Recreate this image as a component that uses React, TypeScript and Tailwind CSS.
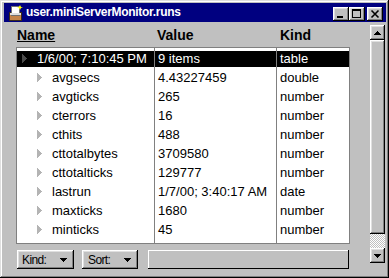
const rows = [
  { name: "1/6/00; 7:10:45 PM", value: "9 items", kind: "table", top: true },
  { name: "avgsecs", value: "4.43227459", kind: "double" },
  { name: "avgticks", value: "265", kind: "number" },
  { name: "cterrors", value: "16", kind: "number" },
  { name: "cthits", value: "488", kind: "number" },
  { name: "cttotalbytes", value: "3709580", kind: "number" },
  { name: "cttotalticks", value: "129777", kind: "number" },
  { name: "lastrun", value: "1/7/00; 3:40:17 AM", kind: "date" },
  { name: "maxticks", value: "1680", kind: "number" },
  { name: "minticks", value: "45", kind: "number" },
];

const raised =
  "bg-[#c0c0c0] shadow-[inset_-1px_-1px_0_#000,inset_1px_1px_0_#fff,inset_-2px_-2px_0_#808080,inset_2px_2px_0_#dfdfdf]";

const Arrow = ({ dark }: { dark?: boolean }) => (
  <svg width="5" height="9" viewBox="0 0 5 9" shapeRendering="crispEdges" className="shrink-0">
    <path d="M0 0L5 4.5L0 9Z" fill={dark ? "#4a4a4a" : "#b4b4b4"} />
  </svg>
);

const DownTri = () => (
  <svg width="7" height="4" viewBox="0 0 7 4" shapeRendering="crispEdges">
    <path d="M0 0H7L3.5 4Z" fill="#000" />
  </svg>
);

const DocIcon = () => (
  <svg width="14" height="16" viewBox="0 0 14 16" className="shrink-0">
    <rect x="0.5" y="7.5" width="12" height="8" fill="#c4844a" stroke="#3a2a1a" />
    <rect x="2.5" y="1.5" width="8" height="9" fill="#fff" stroke="#707070" />
    <rect x="1" y="8" width="11" height="2" fill="#e0e0e0" />
    <path d="M11 0L12 2L14 2.5L12 3L11 5L10 3L8 2.5L10 2Z" fill="#ffff00" />
  </svg>
);

const TitleButton = ({ children, className }: { children: React.ReactNode; className?: string }) => (
  <div className={`w-[16px] h-[14px] mt-[2px] flex items-center justify-center ${raised} ${className ?? ""}`}>
    {children}
  </div>
);

const App = () => {
  return (
    <div className="w-[389px] h-[278px] bg-[#c0c0c0] pt-[3px] pl-[4px] pr-[3px] pb-[3px] flex flex-col font-['Liberation_Sans',Arial,sans-serif] text-black select-none shadow-[inset_-1px_-1px_0_#000,inset_1px_1px_0_#dfdfdf,inset_-2px_-2px_0_#808080,inset_2px_2px_0_#fff]">
      {/* title bar */}
      <div className="h-[19px] bg-[#000080] flex items-center pl-[5px] pr-[3px]">
        <DocIcon />
        <span className="ml-[3px] text-white font-bold text-[12px] tracking-[-0.3px] leading-[19px]">
          user.miniServerMonitor.runs
        </span>
        <div className="ml-auto flex">
          <TitleButton>
            <svg width="16" height="14" viewBox="0 0 16 14" shapeRendering="crispEdges">
              <rect x="4" y="9" width="6" height="2" fill="#000" />
            </svg>
          </TitleButton>
          <TitleButton>
            <svg width="16" height="14" viewBox="0 0 16 14" shapeRendering="crispEdges">
              <path d="M3 2H12V11H3Z M4 4V10H11V4Z" fill="#000" fillRule="evenodd" />
            </svg>
          </TitleButton>
          <TitleButton className="ml-[2px]">
            <svg width="16" height="14" viewBox="0 0 16 14">
              <path d="M4.5 3.5L11.5 10.5M11.5 3.5L4.5 10.5" stroke="#000" strokeWidth="1.6" />
            </svg>
          </TitleButton>
        </div>
      </div>

      <div className="flex-1 flex">
        <div className="ml-[12px] w-[334px] flex flex-col">
          {/* headers */}
          <div className="h-[25px] flex pt-[5px] text-[14px] font-bold leading-[16px]">
            <div className="w-[140px] pl-[1px]">
              <span className="underline decoration-1">Name</span>
            </div>
            <div className="w-[123px] pl-[1px]">Value</div>
            <div className="pl-[1px]">Kind</div>
          </div>

          {/* table */}
          <div className="h-[197px] border border-[#808080] bg-white flex text-[13px] leading-[19px]">
            <div className="w-[138px] border-r border-[#808080] pt-[1px]">
              {rows.map((r) => (
                <div key={r.name} className="h-[19px] flex items-center">
                  <div
                    className={`h-[16px] w-full flex items-center whitespace-nowrap ${
                      r.top ? "bg-black text-white pl-[5px] gap-[10px]" : "pl-[20px] gap-[10px]"
                    }`}
                  >
                    <Arrow dark={r.top} />
                    <span>{r.name}</span>
                  </div>
                </div>
              ))}
            </div>
            <div className="w-[122px] border-r border-[#808080] pt-[1px]">
              {rows.map((r) => (
                <div key={r.name} className="h-[19px] flex items-center">
                  <div
                    className={`h-[16px] w-full flex items-center pl-[3px] whitespace-nowrap ${
                      r.top ? "bg-black text-white" : ""
                    }`}
                  >
                    {r.value}
                  </div>
                </div>
              ))}
            </div>
            <div className="flex-1 pt-[1px]">
              {rows.map((r) => (
                <div key={r.name} className="h-[19px] flex items-center">
                  <div
                    className={`h-[16px] w-full flex items-center pl-[3px] ${
                      r.top ? "bg-black text-white" : ""
                    }`}
                  >
                    {r.kind}
                  </div>
                </div>
              ))}
            </div>
          </div>

          {/* bottom controls */}
          <div className="mt-[6px] flex h-[19px] text-[12px] tracking-[-0.6px]">
            <div className={`ml-[1px] w-[57px] flex items-center justify-between pl-[5px] pr-[7px] ${raised}`}>
              <span>Kind:</span>
              <DownTri />
            </div>
            <div className={`ml-[8px] w-[56px] flex items-center justify-between pl-[6px] pr-[7px] ${raised}`}>
              <span>Sort:</span>
              <DownTri />
            </div>
            <div className="ml-[10px] w-[201px] bg-[#c0c0c0] shadow-[inset_-1px_-1px_0_#000,inset_1px_1px_0_#fff]" />
          </div>
        </div>

        {/* scrollbar */}
        <div className="ml-[20px] w-[15px] mt-[3px] flex flex-col">
          <div className={`h-[15px] flex items-center justify-center ${raised}`}>
            <svg width="7" height="4" viewBox="0 0 7 4" shapeRendering="crispEdges">
              <path d="M0 4H7L3.5 0Z" fill="#000" />
            </svg>
          </div>
          <div className={`h-[194px] ${raised}`} />
          <div className="h-[14px] bg-[image:repeating-conic-gradient(#fff_0%_25%,#c0c0c0_0%_50%)] bg-[length:2px_2px]" />
          <div className={`h-[15px] flex items-center justify-center ${raised}`}>
            <DownTri />
          </div>
        </div>
      </div>
    </div>
  );
};

export default App;
